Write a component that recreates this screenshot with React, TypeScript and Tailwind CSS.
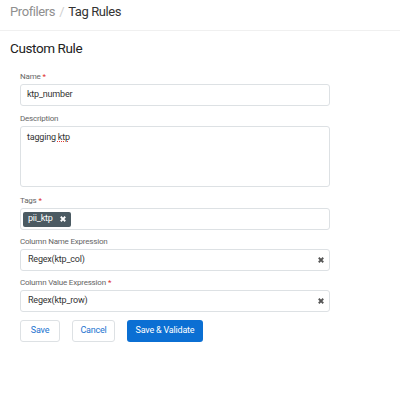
import React from 'react';

const Label = ({ text, required }: { text: string; required?: boolean }) => (
  <div className="text-[8px] tracking-[-0.2px] leading-[10px] h-[10px] text-[#666] mb-[2px]">
    {text}
    {required && <span className="text-[#e02b2b] ml-[2px]">*</span>}
  </div>
);

const ClearIcon = () => (
  <svg width="6" height="6" viewBox="0 0 8 8" className="text-[#555]">
    <path d="M1 1L7 7M7 1L1 7" stroke="currentColor" strokeWidth="2.4" />
  </svg>
);

const ExprField = ({ value }: { value: string }) => (
  <div className="h-[22px] w-[310px] border border-[#dde1e4] rounded-[3px] flex items-center justify-between pl-[7px] pr-[5px] text-[9px] tracking-[-0.2px] text-[#333]">
    <span>{value}</span>
    <ClearIcon />
  </div>
);

export default function App() {
  return (
    <div className="w-[400px] h-[395px] bg-white" style={{ fontFamily: 'Roboto, "Liberation Sans", sans-serif' }}>
      <div className="h-[31px] border-b border-[#f0f0f0] pl-[10px] pt-[4px] text-[13px] tracking-[-0.4px] leading-[16px]">
        <span className="text-[#8f8f8f]">Profilers</span>
        <span className="text-[#cfcfcf] mx-[4px]">/</span>
        <span className="text-[#333]">Tag Rules</span>
      </div>

      <div className="px-[10px] pt-[9px]">
        <h2 className="text-[13.5px] tracking-[-0.4px] leading-[16px] text-[#222]">Custom Rule</h2>

        <div className="pl-[10px] pt-[16px]">
          <Label text="Name" required />
          <div className="h-[22px] w-[310px] border border-[#dde1e4] rounded-[3px] flex items-center pl-[6px] text-[9px] tracking-[-0.2px] text-[#333]">
            ktp_number
          </div>

          <div className="mt-[8px]">
            <Label text="Description" />
            <div className="h-[61px] w-[310px] border border-[#dde1e4] rounded-[3px] pl-[6px] pt-[5px] text-[9px] tracking-[-0.2px] leading-[11px] text-[#333]">
              tagging <span className="underline decoration-dotted decoration-[#e53935]">ktp</span>
            </div>
          </div>

          <div className="mt-[9px]">
            <Label text="Tags" required />
            <div className="h-[22px] w-[310px] border border-[#dde1e4] rounded-[3px] flex items-center pl-[2px]">
              <div className="h-[15px] bg-[#4b5a62] rounded-[2px] flex items-center gap-[7px] px-[5px] text-[9px] tracking-[-0.2px] text-white">
                <span>pii_ktp</span>
                <svg width="6" height="6" viewBox="0 0 8 8">
                  <path d="M1 1L7 7M7 1L1 7" stroke="white" strokeWidth="2.4" />
                </svg>
              </div>
            </div>
          </div>

          <div className="mt-[7px]">
            <Label text="Column Name Expression" />
            <ExprField value="Regex(ktp_col)" />
          </div>

          <div className="mt-[7px]">
            <Label text="Column Value Expression" required />
            <ExprField value="Regex(ktp_row)" />
          </div>

          <div className="flex gap-[12px] mt-[8px]">
            <button className="h-[22px] w-[40px] border border-[#dde1e4] rounded-[3px] text-[9px] tracking-[-0.2px] text-[#1a73d0] bg-white">Save</button>
            <button className="h-[22px] w-[43px] border border-[#dde1e4] rounded-[3px] text-[9px] tracking-[-0.2px] text-[#1a73d0] bg-white">Cancel</button>
            <button className="h-[22px] w-[76px] rounded-[3px] text-[9px] tracking-[-0.2px] text-white bg-[#0b6fd3]">Save &amp; Validate</button>
          </div>
        </div>
      </div>
    </div>
  );
}
